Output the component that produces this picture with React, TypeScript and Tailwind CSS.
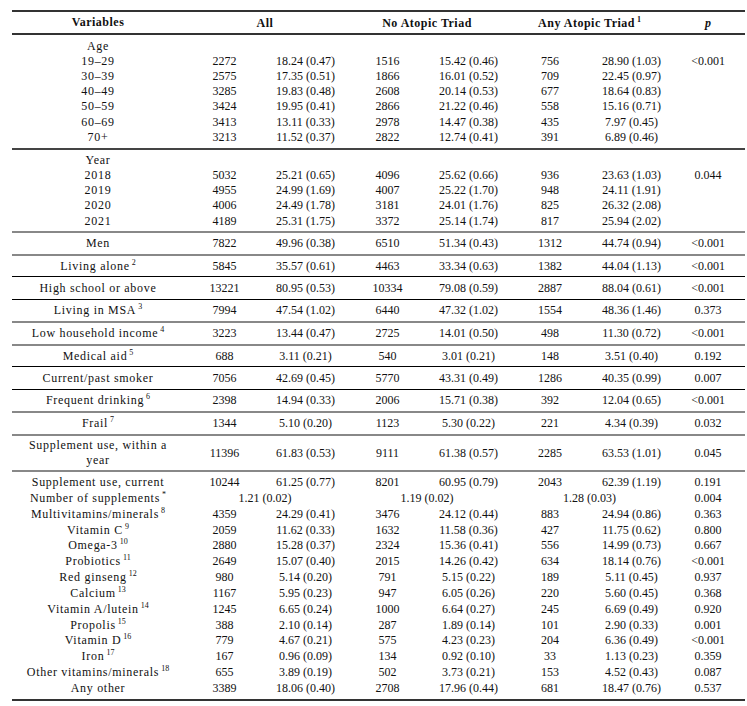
import React from 'react';

type Vals = [string, string, string, string, string, string];

type Row = {
  label: string;
  sup?: string;
  v?: Vals;
  span?: [string, string, string];
  p?: string;
  head?: boolean;
};

type Section = { border: string; pt: string; pb: string; lead: string; rows: Row[]; wrapLabel?: boolean };

const widths = ['w-[172px]', 'w-[81px]', 'w-[81px]', 'w-[83px]', 'w-[79px]', 'w-[84px]', 'w-[79px]', 'w-[74px]'];

const gray = 'border-t-2 border-[#888]';
const black = 'border-t border-black';

const single = (border: string, row: Row): Section => ({
  border,
  pt: border === black ? 'pt-[3.5px]' : 'pt-[3px]',
  pb: border === black ? 'pb-[2.5px]' : 'pb-[2px]',
  lead: 'leading-[15.5px]',
  rows: [row],
});

const sections: Section[] = [
  {
    border: 'border-t-2 border-[#333]',
    pt: 'pt-[2.5px]',
    pb: 'pb-[2.5px]',
    lead: 'leading-[15.3px]',
    rows: [
      { label: 'Age', head: true },
      { label: '19–29', v: ['2272', '18.24 (0.47)', '1516', '15.42 (0.46)', '756', '28.90 (1.03)'], p: '<0.001' },
      { label: '30–39', v: ['2575', '17.35 (0.51)', '1866', '16.01 (0.52)', '709', '22.45 (0.97)'] },
      { label: '40–49', v: ['3285', '19.83 (0.48)', '2608', '20.14 (0.53)', '677', '18.64 (0.83)'] },
      { label: '50–59', v: ['3424', '19.95 (0.41)', '2866', '21.22 (0.46)', '558', '15.16 (0.71)'] },
      { label: '60–69', v: ['3413', '13.11 (0.33)', '2978', '14.47 (0.38)', '435', '7.97 (0.45)'] },
      { label: '70+', v: ['3213', '11.52 (0.37)', '2822', '12.74 (0.41)', '391', '6.89 (0.46)'] },
    ],
  },
  {
    border: 'border-t-2 border-[#444]',
    pt: 'pt-[2px]',
    pb: 'pb-[2.5px]',
    lead: 'leading-[15.3px]',
    rows: [
      { label: 'Year', head: true },
      { label: '2018', v: ['5032', '25.21 (0.65)', '4096', '25.62 (0.66)', '936', '23.63 (1.03)'], p: '0.044' },
      { label: '2019', v: ['4955', '24.99 (1.69)', '4007', '25.22 (1.70)', '948', '24.11 (1.91)'] },
      { label: '2020', v: ['4006', '24.49 (1.78)', '3181', '24.01 (1.76)', '825', '26.32 (2.08)'] },
      { label: '2021', v: ['4189', '25.31 (1.75)', '3372', '25.14 (1.74)', '817', '25.94 (2.02)'] },
    ],
  },
  single(gray, { label: 'Men', v: ['7822', '49.96 (0.38)', '6510', '51.34 (0.43)', '1312', '44.74 (0.94)'], p: '<0.001' }),
  single(gray, { label: 'Living alone', sup: '2', v: ['5845', '35.57 (0.61)', '4463', '33.34 (0.63)', '1382', '44.04 (1.13)'], p: '<0.001' }),
  single(black, { label: 'High school or above', v: ['13221', '80.95 (0.53)', '10334', '79.08 (0.59)', '2887', '88.04 (0.61)'], p: '<0.001' }),
  single(black, { label: 'Living in MSA', sup: '3', v: ['7994', '47.54 (1.02)', '6440', '47.32 (1.02)', '1554', '48.36 (1.46)'], p: '0.373' }),
  single(gray, { label: 'Low household income', sup: '4', v: ['3223', '13.44 (0.47)', '2725', '14.01 (0.50)', '498', '11.30 (0.72)'], p: '<0.001' }),
  single(gray, { label: 'Medical aid', sup: '5', v: ['688', '3.11 (0.21)', '540', '3.01 (0.21)', '148', '3.51 (0.40)'], p: '0.192' }),
  single(black, { label: 'Current/past smoker', v: ['7056', '42.69 (0.45)', '5770', '43.31 (0.49)', '1286', '40.35 (0.99)'], p: '0.007' }),
  single(black, { label: 'Frequent drinking', sup: '6', v: ['2398', '14.94 (0.33)', '2006', '15.71 (0.38)', '392', '12.04 (0.65)'], p: '<0.001' }),
  single(gray, { label: 'Frail', sup: '7', v: ['1344', '5.10 (0.20)', '1123', '5.30 (0.22)', '221', '4.34 (0.39)'], p: '0.032' }),
  {
    border: gray,
    pt: 'pt-[2.5px]',
    pb: 'pb-[1.5px]',
    lead: 'leading-[15px]',
    wrapLabel: true,
    rows: [{ label: 'Supplement use, within a year', v: ['11396', '61.83 (0.53)', '9111', '61.38 (0.57)', '2285', '63.53 (1.01)'], p: '0.045' }],
  },
  {
    border: gray,
    pt: 'pt-[3px]',
    pb: 'pb-[2px]',
    lead: 'leading-[15.85px]',
    rows: [
      { label: 'Supplement use, current', v: ['10244', '61.25 (0.77)', '8201', '60.95 (0.79)', '2043', '62.39 (1.19)'], p: '0.191' },
      { label: 'Number of supplements', sup: '*', span: ['1.21 (0.02)', '1.19 (0.02)', '1.28 (0.03)'], p: '0.004' },
      { label: 'Multivitamins/minerals', sup: '8', v: ['4359', '24.29 (0.41)', '3476', '24.12 (0.44)', '883', '24.94 (0.86)'], p: '0.363' },
      { label: 'Vitamin C', sup: '9', v: ['2059', '11.62 (0.33)', '1632', '11.58 (0.36)', '427', '11.75 (0.62)'], p: '0.800' },
      { label: 'Omega-3', sup: '10', v: ['2880', '15.28 (0.37)', '2324', '15.36 (0.41)', '556', '14.99 (0.73)'], p: '0.667' },
      { label: 'Probiotics', sup: '11', v: ['2649', '15.07 (0.40)', '2015', '14.26 (0.42)', '634', '18.14 (0.76)'], p: '<0.001' },
      { label: 'Red ginseng', sup: '12', v: ['980', '5.14 (0.20)', '791', '5.15 (0.22)', '189', '5.11 (0.45)'], p: '0.937' },
      { label: 'Calcium', sup: '13', v: ['1167', '5.95 (0.23)', '947', '6.05 (0.26)', '220', '5.60 (0.45)'], p: '0.368' },
      { label: 'Vitamin A/lutein', sup: '14', v: ['1245', '6.65 (0.24)', '1000', '6.64 (0.27)', '245', '6.69 (0.49)'], p: '0.920' },
      { label: 'Propolis', sup: '15', v: ['388', '2.10 (0.14)', '287', '1.89 (0.14)', '101', '2.90 (0.33)'], p: '0.001' },
      { label: 'Vitamin D', sup: '16', v: ['779', '4.67 (0.21)', '575', '4.23 (0.23)', '204', '6.36 (0.49)'], p: '<0.001' },
      { label: 'Iron', sup: '17', v: ['167', '0.96 (0.09)', '134', '0.92 (0.10)', '33', '1.13 (0.23)'], p: '0.359' },
      { label: 'Other vitamins/minerals', sup: '18', v: ['655', '3.89 (0.19)', '502', '3.73 (0.21)', '153', '4.52 (0.43)'], p: '0.087' },
      { label: 'Any other', v: ['3389', '18.06 (0.40)', '2708', '17.96 (0.44)', '681', '18.47 (0.76)'], p: '0.537' },
    ],
  },
];

const Sup: React.FC<{ children: React.ReactNode }> = ({ children }) => (
  <sup className="text-[8px] -top-[5px] ml-[2px] tracking-normal">{children}</sup>
);

export default function App() {
  return (
    <div className="bg-white min-h-screen pt-[10px] pl-[12px] text-[12px] text-[#111] [font-family:'Liberation_Serif',serif]">
      <table className="table-fixed w-[733px] border-collapse">
        <colgroup>
          {widths.map((w, i) => (
            <col key={i} className={w} />
          ))}
        </colgroup>
        <thead>
          <tr className="border-t-2 border-[#333] font-bold">
            <th className="pt-[3px] pb-[3px] leading-[15px] text-center tracking-[0.5px]">Variables</th>
            <th colSpan={2} className="text-center tracking-[0.5px]">All</th>
            <th colSpan={2} className="text-center tracking-[0.5px]">No Atopic Triad</th>
            <th colSpan={2} className="text-center tracking-[0.5px]">
              Any Atopic Triad<Sup>1</Sup>
            </th>
            <th className="text-center italic">p</th>
          </tr>
        </thead>
        {sections.map((s, si) => (
          <tbody key={si} className={`${s.border} ${si === sections.length - 1 ? 'border-b-2 border-b-[#333]' : ''}`}>
            {s.rows.map((r, ri) => {
              const first = ri === 0;
              const last = ri === s.rows.length - 1;
              const pad = `${first ? s.pt : ''} ${last ? s.pb : ''}`;
              const cell = `${pad} ${s.lead} text-center whitespace-nowrap align-middle`;
              return (
                <tr key={ri}>
                  <td className={`${pad} ${r.head ? 'leading-[16px]' : s.lead} text-center align-middle tracking-[0.7px] ${s.wrapLabel ? 'px-[6px]' : 'whitespace-nowrap'}`}>
                    {r.label}
                    {r.sup && <Sup>{r.sup}</Sup>}
                  </td>
                  {r.span ? (
                    r.span.map((x, i) => (
                      <td key={i} colSpan={2} className={cell}>
                        {x}
                      </td>
                    ))
                  ) : r.v ? (
                    r.v.map((x, i) => (
                      <td key={i} className={cell}>
                        {x}
                      </td>
                    ))
                  ) : (
                    <td colSpan={6} className={cell} />
                  )}
                  <td className={cell}>{r.p ?? ''}</td>
                </tr>
              );
            })}
          </tbody>
        ))}
      </table>
      <p className="mt-[3px] ml-[176px] w-[556px] leading-[15px] tracking-[0.3px]">
        Unweighted frequency and weighted % (SE) are presented. <span className="italic">p</span> values from the chi-square test between participants with and without atopic triad.
      </p>
    </div>
  );
}
